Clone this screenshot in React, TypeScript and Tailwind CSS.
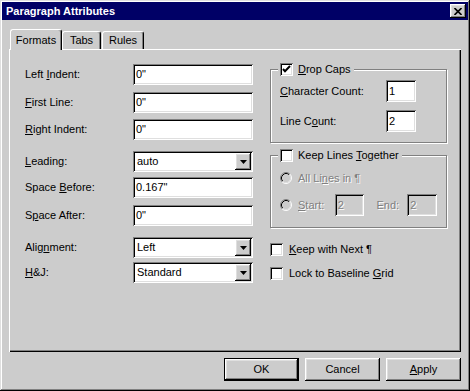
import type { ReactNode } from 'react'

const sunken =
  'shadow-[inset_1px_1px_0_#808080,inset_-1px_-1px_0_#ffffff,inset_2px_2px_0_#000000,inset_-2px_-2px_0_#dfdfdf]'
const raised =
  'shadow-[inset_-1px_-1px_0_#000000,inset_1px_1px_0_#ffffff,inset_-2px_-2px_0_#808080,inset_2px_2px_0_#dfdfdf]'
const etched = 'border border-[#808080] shadow-[inset_1px_1px_0_#ffffff,1px_1px_0_#ffffff]'
const dim = 'text-[#808080] [text-shadow:1px_1px_0_#ffffff]'

function Field({ value, disabled }: { value: string; disabled?: boolean }) {
  return (
    <div
      className={`flex h-[21px] w-[120px] items-center pl-[3px] ${sunken} ${
        disabled ? 'bg-[#cccccc] text-[#808080]' : 'bg-white'
      }`}
    >
      {value}
    </div>
  )
}

function SmallField({ value, disabled }: { value: string; disabled?: boolean }) {
  return (
    <div
      className={`flex h-[22px] w-[30px] items-center pl-[3px] ${sunken} ${
        disabled ? 'bg-[#cccccc] text-[#808080]' : 'bg-white'
      }`}
    >
      {value}
    </div>
  )
}

function Combo({ value }: { value: string }) {
  return (
    <div className={`flex h-[21px] w-[120px] items-center justify-between bg-white p-[2px] pl-[4px] ${sunken}`}>
      <span>{value}</span>
      <div className={`flex h-[17px] w-[16px] items-center justify-center bg-[#cccccc] ${raised}`}>
        <svg width="7" height="4" viewBox="0 0 7 4">
          <path d="M0 0h7L3.5 4z" fill="#000" />
        </svg>
      </div>
    </div>
  )
}

function Check({ checked }: { checked?: boolean }) {
  return (
    <div className={`flex h-[13px] w-[13px] shrink-0 items-center justify-center bg-white ${sunken}`}>
      {checked && (
        <svg width="9" height="9" viewBox="0 0 9 9">
          <path d="M1 4l2 2.2L8 1" fill="none" stroke="#000" strokeWidth="2" />
        </svg>
      )}
    </div>
  )
}

function Radio() {
  return (
    <svg width="12" height="12" viewBox="0 0 12 12" className="shrink-0">
      <circle cx="6" cy="6" r="5" fill="#cccccc" />
      <path d="M2.11 9.89A5.5 5.5 0 0 1 9.89 2.11" fill="none" stroke="#808080" />
      <path d="M9.89 2.11A5.5 5.5 0 0 1 2.11 9.89" fill="none" stroke="#ffffff" />
      <path d="M2.82 9.18A4.5 4.5 0 0 1 9.18 2.82" fill="none" stroke="#000000" />
      <path d="M9.18 2.82A4.5 4.5 0 0 1 2.82 9.18" fill="none" stroke="#dfdfdf" />
    </svg>
  )
}

function Row({ label, children, mt }: { label: ReactNode; children: ReactNode; mt: string }) {
  return (
    <div className={`flex items-center ${mt}`}>
      <div className="w-[108px]">{label}</div>
      {children}
    </div>
  )
}

function Button({ children, primary }: { children: ReactNode; primary?: boolean }) {
  return (
    <div
      className={`flex h-[23px] w-[75px] items-center justify-center bg-[#cccccc] ${
        primary ? 'border border-black' : ''
      } ${raised}`}
    >
      {children}
    </div>
  )
}

export default function App() {
  return (
    <div className="h-[391px] w-[470px] bg-[#cccccc] p-[2px] font-['Liberation_Sans',Arial,sans-serif] text-[11px] leading-none text-black shadow-[inset_-1px_-1px_0_#000000,inset_1px_1px_0_#dfdfdf,inset_-2px_-2px_0_#808080,inset_2px_2px_0_#ffffff]">
      <div className="flex h-[18px] items-center justify-between bg-[#000066] pl-[4px] pr-[2px]">
        <span className="font-bold text-white">Paragraph Attributes</span>
        <div className={`flex h-[14px] w-[16px] items-center justify-center bg-[#cccccc] ${raised}`}>
          <svg width="8" height="7" viewBox="0 0 8 7">
            <path d="M0.5 0L7.5 7M7.5 0L0.5 7" stroke="#000" strokeWidth="1.6" />
          </svg>
        </div>
      </div>

      <div className="pl-[7px] pt-[9px]">
        <div className="flex h-[20px] items-end">
          <div className="relative z-10 -mb-[1px] ml-[1px] flex h-[21px] w-[52px] items-center justify-center rounded-t-[3px] border-l border-t border-r border-white border-r-black bg-[#cccccc] shadow-[inset_-1px_0_0_#808080]">
            Formats
          </div>
          <div className="flex h-[18px] w-[39px] items-center justify-center rounded-t-[3px] border-l border-t border-r border-white border-r-black shadow-[inset_-1px_0_0_#808080]">
            Tabs
          </div>
          <div className="ml-[1px] flex h-[18px] w-[42px] items-center justify-center rounded-t-[3px] border-l border-t border-r border-white border-r-black shadow-[inset_-1px_0_0_#808080]">
            Rules
          </div>
        </div>

        <div className="flex h-[303px] w-[452px] pl-[16px] pt-[15px] shadow-[inset_1px_1px_0_#ffffff,inset_-1px_-1px_0_#000000,inset_-2px_-2px_0_#808080]">
          <div className="w-[228px]">
            <Row mt="mt-0" label={<>Left <u>I</u>ndent:</>}>
              <Field value={'0"'} />
            </Row>
            <Row mt="mt-[7px]" label={<><u>F</u>irst Line:</>}>
              <Field value={'0"'} />
            </Row>
            <Row mt="mt-[6px]" label={<><u>R</u>ight Indent:</>}>
              <Field value={'0"'} />
            </Row>
            <Row mt="mt-[11px]" label={<><u>L</u>eading:</>}>
              <Combo value="auto" />
            </Row>
            <Row mt="mt-[5px]" label={<>Space <u>B</u>efore:</>}>
              <Field value={'0.167"'} />
            </Row>
            <Row mt="mt-[7px]" label={<>S<u>p</u>ace After:</>}>
              <Field value={'0"'} />
            </Row>
            <Row mt="mt-[11px]" label={<>Alig<u>n</u>ment:</>}>
              <Combo value="Left" />
            </Row>
            <Row mt="mt-[4px]" label={<><u>H</u>&amp;J:</>}>
              <Combo value="Standard" />
            </Row>
          </div>

          <div className="ml-[17px] w-[177px]">
            <div className={`relative mt-[5px] h-[74px] ${etched} px-[9px] pt-[10px]`}>
              <div className="absolute -top-[7px] left-[7px] flex items-center gap-[5px] bg-[#cccccc] px-[2px]">
                <Check checked />
                <span className="pr-[1px]">
                  <u>D</u>rop Caps
                </span>
              </div>
              <div className="flex items-center justify-between pr-[21px]">
                <span>
                  <u>C</u>haracter Count:
                </span>
                <SmallField value="1" />
              </div>
              <div className="mt-[8px] flex items-center justify-between pr-[21px]">
                <span>
                  Line C<u>o</u>unt:
                </span>
                <SmallField value="2" />
              </div>
            </div>

            <div className={`relative mt-[12px] h-[73px] ${etched} px-[9px] pt-[16px]`}>
              <div className="absolute -top-[7px] left-[7px] flex items-center gap-[5px] bg-[#cccccc] px-[2px]">
                <Check />
                <span className="pr-[1px]">
                  Keep Lines <u>T</u>ogether
                </span>
              </div>
              <div className={`flex items-center gap-[6px] ${dim}`}>
                <Radio />
                <span>
                  All Li<u>n</u>es in ¶
                </span>
              </div>
              <div className={`mt-[10px] flex items-center ${dim}`}>
                <Radio />
                <span className="ml-[6px] w-[37px]">
                  <u>S</u>tart:
                </span>
                <SmallField value="2" disabled />
                <span className="ml-[12px] w-[31px]">End:</span>
                <SmallField value="2" disabled />
              </div>
            </div>

            <div className="mt-[15px] flex items-center gap-[6px]">
              <Check />
              <span>
                <u>K</u>eep with Next ¶
              </span>
            </div>
            <div className="mt-[11px] flex items-center gap-[6px]">
              <Check />
              <span>
                Lock to Baseline <u>G</u>rid
              </span>
            </div>
          </div>
        </div>

        <div className="mt-[6px] flex w-[452px] justify-end gap-[6px]">
          <Button primary>OK</Button>
          <Button>Cancel</Button>
          <Button>
            <span>
              <u>A</u>pply
            </span>
          </Button>
        </div>
      </div>
    </div>
  )
}
